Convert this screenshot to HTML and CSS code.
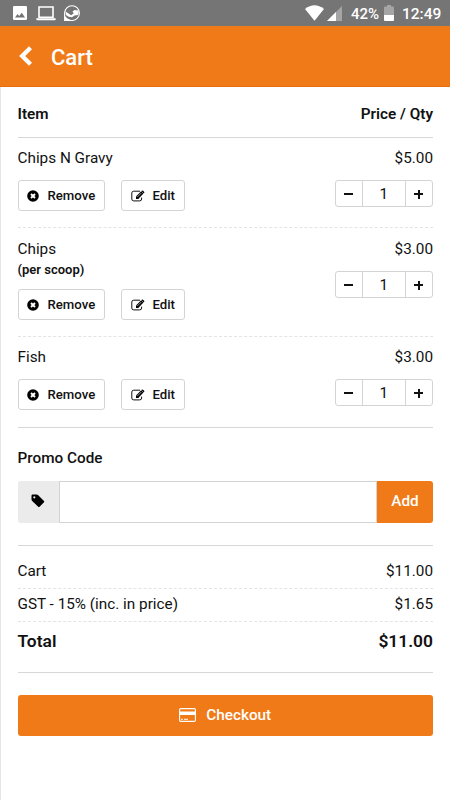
FILE: index.html
```html
<!DOCTYPE html>
<html lang="en">
<head>
<meta charset="utf-8">
<title>Cart</title>
<link rel="stylesheet" href="styles.css">
</head>
<body>
<svg class="defs" width="0" height="0" aria-hidden="true">
  <symbol id="remove" viewBox="0 0 12 12"><circle cx="6" cy="6" r="5.800"/><path d="M4 4l4 4M8 4l-4 4" stroke="#fff" stroke-width="1.900"/></symbol>
  <symbol id="edit" viewBox="0 0 14 12"><path d="M9 1.200H2.700Q.8 1.200.8 3v6Q.8 10.900 2.700 10.900h6q1.900 0 1.900-1.900V7.600" fill="none" stroke="#111" stroke-width="1"/><path d="M5 8.900V6.500L10.200 1.300l2.200 2.200L7.300 8.900z"/><path d="M10.800.7q.6-.6 1.200 0l1.100 1.100q.6.6 0 1.200l-.4.4-2.300-2.300z"/><path d="M6.300 7l4-4" stroke="#fff" stroke-width=".6"/></symbol>
</svg>
<div class="status">
  <svg class="pic" viewBox="0 0 14 14"><rect width="14" height="14" rx="1.200" fill="#fff"/><path d="M2 11.500l2.500-3.500 1.700 2L8.800 6.800l3.200 4.700z" fill="#757575"/></svg>
  <svg class="laptop" viewBox="0 0 20 15"><path d="M3 1h14v10.300H3z" fill="none" stroke="#fff" stroke-width="1.600"/><path d="M.3 12.300h19.400v1.200q0 .8-1 .8H1.300q-1 0-1-.8z" fill="#fff"/></svg>
  <svg class="globe" viewBox="0 0 16 16"><path d="M.6 8v7.500H8A7.400 7.400 0 1 0 .6 8z" fill="#747474" stroke="#fff" stroke-width="1.100"/><path d="M1.500 6.500Q5 8.500 7 10.300L14.500 5.300Q15 8 14 10 10 10 8 12.300 4.500 12.300 2 10z" fill="#fff"/><path d="M8.500 6.500l2-1.500 3.800.5-4 4z" fill="#fff"/><path d="M1 11l2.500 2.500L7 15H1z" fill="#fff"/></svg>
  <svg class="wifi" viewBox="0 0 19 16"><path d="M0 4Q9.500-3.500 19 4L9.500 15.700z" fill="#fff"/></svg>
  <svg class="signal" viewBox="0 0 15 15"><path d="M15 0v15H0z" fill="#a5a5a5"/><path d="M9 6v9H0z" fill="#fff"/></svg>
  <span class="percent">42%</span>
  <svg class="battery" viewBox="0 0 10 16"><path d="M3 0h4v1.500h2q1 0 1 1V10H0V2.500q0-1 1-1h2z" fill="#a5a5a5"/><path d="M0 10h10v5q0 1-1 1H1q-1 0-1-1z" fill="#fff"/></svg>
  <span class="time">12:49</span>
</div>
<header class="bar">
  <svg class="back" viewBox="0 0 14 20"><path d="M11.500 1.800L3.200 10l8.300 8.200" fill="none" stroke="#fff" stroke-width="4.300"/></svg>
  <h1>Cart</h1>
</header>
<main>
  <div class="row head"><span>Item</span><span>Price / Qty</span></div>
  <section class="item">
    <div class="row"><span class="name">Chips N Gravy</span><span class="price">$5.00</span></div>
    <div class="row controls">
      <div class="actions"><button class="remove"><svg><use href="#remove"/></svg><span>Remove</span></button><button class="edit"><svg><use href="#edit"/></svg><span>Edit</span></button></div>
      <div class="qty"><b class="minus"></b><span>1</span><b class="plus"></b></div>
    </div>
  </section>
  <section class="item noted">
    <div class="row"><span class="name">Chips</span><span class="price">$3.00</span></div>
    <div class="row controls">
      <div><div class="note">(per scoop)</div>
      <div class="actions"><button class="remove"><svg><use href="#remove"/></svg><span>Remove</span></button><button class="edit"><svg><use href="#edit"/></svg><span>Edit</span></button></div></div>
      <div class="qty"><b class="minus"></b><span>1</span><b class="plus"></b></div>
    </div>
  </section>
  <section class="item last">
    <div class="row"><span class="name">Fish</span><span class="price">$3.00</span></div>
    <div class="row controls">
      <div class="actions"><button class="remove"><svg><use href="#remove"/></svg><span>Remove</span></button><button class="edit"><svg><use href="#edit"/></svg><span>Edit</span></button></div>
      <div class="qty"><b class="minus"></b><span>1</span><b class="plus"></b></div>
    </div>
  </section>
  <section class="promo">
    <h2>Promo Code</h2>
    <div class="field">
      <div class="tag"><svg viewBox="0 0 14 14"><path fill-rule="evenodd" d="M.5 1.700Q.5.500 1.700.500H5.600q.8 0 1.400.600l6 5.800q.6.700 0 1.400l-4.400 4.500q-.7.600-1.400 0l-6-5.900Q.5 6.200.5 5.500zM3.300 2.200a1.100 1.100 0 1 0 .01 0z"/></svg></div>
      <input type="text" aria-label="Promo Code">
      <button class="add">Add</button>
    </div>
  </section>
  <section class="totals">
    <div class="row line"><span>Cart</span><span class="price">$11.00</span></div>
    <div class="row line"><span>GST - 15% (inc. in price)</span><span class="price">$1.65</span></div>
    <div class="row total"><span>Total</span><span>$11.00</span></div>
  </section>
  <button class="checkout"><svg viewBox="0 0 17 14"><rect x=".6" y=".6" width="15.800" height="12.800" rx="1.200" fill="none" stroke="#fff" stroke-width="1.100"/><path d="M.5 3.500h16v3.500H.5zM2 10.800h2v1H2zM5 10.800h4v1H5z" fill="#fff"/></svg><span>Checkout</span></button>
</main>
</body>
</html>
```
FILE: styles.css
```css
* { box-sizing: border-box; }
body {
  margin: 0;
  height: 800px;
  overflow: hidden;
  background: #fff;
  color: #111;
  font-family: Roboto, "Liberation Sans", sans-serif;
  font-size: 15.3px;
}
.defs { position: absolute; }
svg { display: block; flex: none; }
h1, h2 { margin: 0; font-weight: 500; }
button { font-family: inherit; color: inherit; padding: 0; margin: 0; }
.row { display: flex; justify-content: space-between; }

.status {
  height: 26px;
  background: #757575;
  color: #fff;
  display: flex;
  padding-left: 13px;
  font-size: 15px;
  font-weight: 500;
  line-height: 28px;
}
.pic { width: 14px; height: 14px; margin-top: 6px; }
.laptop { width: 20px; height: 15px; margin: 6px 0 0 9px; }
.globe { width: 16px; height: 16px; margin: 5px 0 0 8px; }
.wifi { width: 19px; height: 16px; margin: 5px 0 0 225px; }
.signal { width: 15px; height: 15px; margin: 6px 0 0 3px; }
.percent { width: 33px; margin-left: 9px; }
.battery { width: 10px; height: 16px; margin-top: 5px; }
.time { margin-left: 8px; font-size: 15.5px; }

.bar {
  height: 61px;
  background: #f07a18;
  color: #fff;
  display: flex;
  align-items: center;
  padding: 0 0 0 19px;
  border-bottom: 1px solid #ea6f0c;
}
.back { width: 14px; height: 20px; margin-top: -1px; }
.bar h1 { font-size: 22px; margin: 2px 0 0 18px; }

main { height: 713px; padding: 0 17px 0 16.5px; border-left: 1px solid #e6e6e6; }
.head {
  height: 51px;
  border-bottom: 1px solid #d8d8d8;
  line-height: 54px;
  font-weight: 600;
}
.item { height: 90px; border-bottom: 1px dashed #e4e4e4; padding-top: 10px; }
.item.noted { height: 109px; }
.item.last { height: 91px; border-bottom: 1px solid #d8d8d8; }
.item .row:first-child { line-height: 21px; }
.item.noted .row:first-child { line-height: 22px; }
.controls { padding-top: 11px; align-items: flex-start; }
.noted .controls { padding-top: 0; }
.noted .qty { margin-top: 11px; }
.note { font-size: 13px; font-weight: 600; line-height: 19px; margin-bottom: 10px; }
.actions { display: flex; gap: 16px; }
.actions button {
  height: 31px;
  background: #fff;
  border: 1px solid #d4d4d4;
  border-radius: 3px;
  display: flex;
  align-items: center;
  font-size: 13.2px;
  font-weight: 500;
}
.actions .remove { width: 87.5px; padding-left: 8.5px; gap: 8.5px; }
.actions .edit { width: 64px; padding-left: 8.5px; gap: 9px; }
.remove svg { width: 12px; height: 12px; }
.edit svg { width: 14px; height: 12px; margin-right: -1px; }
.qty {
  display: grid;
  grid-template-columns: 26.5px 43.5px 26.5px;
  width: 98.5px;
  height: 27px;
  border: 1px solid #d4d4d4;
  border-radius: 3px;
}
.qty span {
  border: solid #d4d4d4;
  border-width: 0 1px;
  text-align: center;
  line-height: 26px;
}
.minus, .plus { display: grid; place-items: center; }
.minus::before, .plus::before, .plus::after { content: ""; grid-area: 1 / 1; width: 9px; height: 2px; background: #111; }
.plus::after { width: 2px; height: 9px; }

.promo { height: 118px; border-bottom: 1px solid #d8d8d8; padding-top: 20px; }
.promo h2 { font-size: 15.3px; line-height: 21px; }
.field { display: flex; height: 42px; margin-top: 12px; }
.tag { width: 41.5px; background: #ebebeb; border-radius: 3px 0 0 3px; display: grid; place-items: center; }
.tag svg { width: 14px; height: 14px; margin-top: -3px; }
.field input { flex: 1; min-width: 0; border: 1px solid #d4d4d4; border-radius: 0; background: #fff; outline: 0; }
.add { width: 56px; border: 0; border-radius: 0 3px 3px 0; background: #f07a18; color: #fff; font-size: 15.3px; font-weight: 500; padding-bottom: 2px; }

.totals { height: 127px; padding-top: 10px; border-bottom: 1px solid #d8d8d8; }
.line { height: 33px; line-height: 31px; border-bottom: 1px dashed #e4e4e4; }
.total { font-size: 17.4px; font-weight: 600; line-height: 38px; }
.checkout {
  width: 100%;
  height: 41px;
  margin-top: 22px;
  border: 0;
  border-radius: 3px;
  background: #f07a18;
  color: #fff;
  display: flex;
  align-items: center;
  justify-content: center;
  gap: 10px;
  padding-bottom: 2px;
  font-size: 15.3px;
  font-weight: 500;
}
.checkout svg { width: 17px; height: 14px; }
```
